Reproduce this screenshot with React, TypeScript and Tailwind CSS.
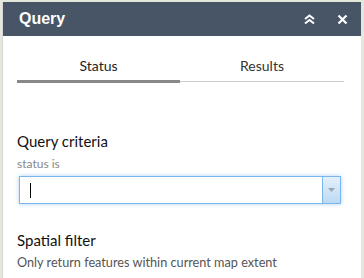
import React from 'react';

export default function App() {
  return (
    <div className="w-[364px] h-[278px] bg-[#e4e8dc] overflow-hidden pt-[2px] pl-[2px]" style={{ fontFamily: 'Lato, "Open Sans", sans-serif' }}>
      <div className="w-[359px] h-[276px] bg-white border-l border-[#d6d6d6] flex flex-col">
        {/* header */}
        <div className="h-[34px] bg-[#485566] flex items-center pl-[16px] pr-[13px] text-white">
          <span className="text-[16px] font-bold" style={{ fontFamily: '"Liberation Sans", Arial, sans-serif' }}>Query</span>
          <div className="ml-auto flex items-center gap-[21px]">
            <svg width="13" height="12" viewBox="0 0 13 12" fill="none" stroke="white" strokeWidth="2">
              <path d="M2 6 L6.5 2.5 L11 6" />
              <path d="M2 10.5 L6.5 7 L11 10.5" />
            </svg>
            <svg width="11" height="11" viewBox="0 0 11 11" stroke="white" strokeWidth="2.2">
              <path d="M1.5 1.5 L9.5 9.5 M9.5 1.5 L1.5 9.5" />
            </svg>
          </div>
        </div>

        {/* tabs */}
        <div className="mx-[14px] mt-[20px] flex text-[14px] text-[#222]">
          <div className="w-[163px] flex flex-col items-center">
            <span className="leading-[20px]">Status</span>
            <div className="mt-[4px] w-full h-[3px] bg-[#888]" />
          </div>
          <div className="w-[164px] flex flex-col items-center">
            <span className="leading-[20px] text-[#333]">Results</span>
            <div className="mt-[5px] w-full h-[1px] bg-[#ccc]" />
          </div>
        </div>

        {/* query criteria */}
        <div className="px-[14px] mt-[48px]">
          <div className="text-[15px] text-[#111] leading-[20px]">Query criteria</div>
          <div className="mt-[5px] text-[12px] text-[#888] leading-[16px]">status is</div>
          <div className="mt-[4px] ml-[2px] w-[322px] h-[28px] border border-[#7ab6ec] shadow-[0_0_4px_rgba(90,160,230,0.5)] flex">
            <div className="flex-1 flex items-center pl-[10px]">
              <div className="w-[1px] h-[15px] bg-black" />
            </div>
            <div className="w-[18px] border-l border-[#7ab6ec] bg-gradient-to-b from-[#e4f0fb] to-[#bcd9f4] flex items-center justify-center">
              <svg width="7" height="4" viewBox="0 0 7 4"><path d="M0 0 L7 0 L3.5 4 Z" fill="#9aa8b6" /></svg>
            </div>
          </div>
        </div>

        {/* spatial filter */}
        <div className="px-[14px] mt-[26px]">
          <div className="text-[15px] text-[#111] leading-[20px]">Spatial filter</div>
          <div className="mt-[3px] text-[12.7px] text-[#555] leading-[18px]">Only return features within current map extent</div>
        </div>
      </div>
    </div>
  );
}
